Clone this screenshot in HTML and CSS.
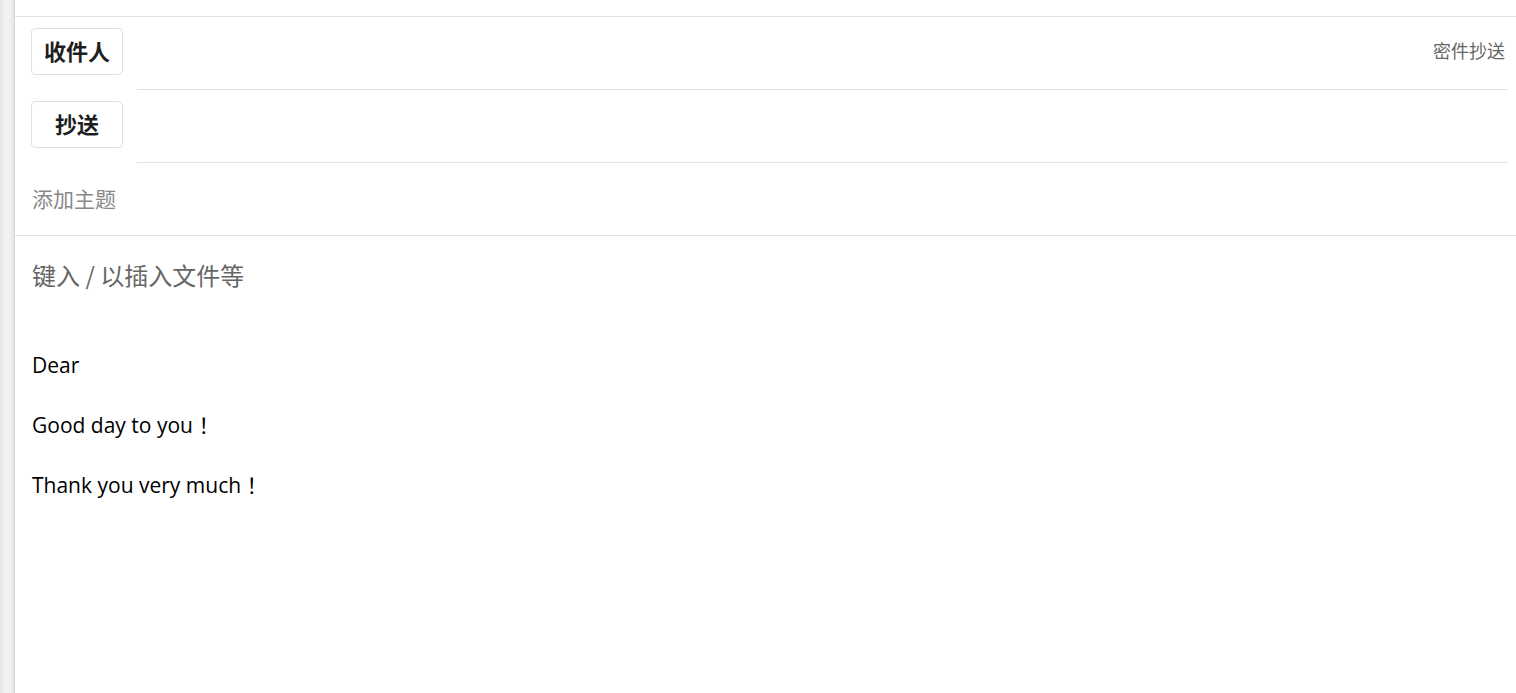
FILE: index.html
```html
<!DOCTYPE html>
<html lang="zh-CN">
<head>
<meta charset="utf-8">
<title>写邮件</title>
<link rel="stylesheet" href="styles.css">
</head>
<body>
<div class="app">
  <div class="rail"></div>
  <main class="compose">
    <div class="topbar"></div>
    <div class="row">
      <button class="chip">收件人</button>
      <div class="field"><span class="bcc">密件抄送</span></div>
    </div>
    <div class="row">
      <button class="chip">抄送</button>
      <div class="field"></div>
    </div>
    <div class="subject">添加主题</div>
    <div class="body">
      <div class="placeholder">键入 / 以插入文件等</div>
      <p class="para first">Dear</p>
      <p class="para">Good day to you ！</p>
      <p class="para">Thank you very much ！</p>
    </div>
  </main>
</div>
</body>
</html>
```

FILE: styles.css
```css
html, body {
  margin: 0;
  padding: 0;
  height: 100%;
  background: #ffffff;
}
body {
  font-family: "Noto Sans CJK SC", "Noto Sans", sans-serif;
  color: #222;
  overflow: hidden;
}
.app {
  display: flex;
  height: 693px;
}
.rail {
  width: 14px;
  flex: none;
  background: linear-gradient(to right, #e4e4e4 0px, #efefef 3px, #f3f3f3 7px, #eeeeee 11px, #e2e2e2 14px);
  border-right: 1px solid #d8d8d8;
}
.compose {
  flex: 1;
  display: flex;
  flex-direction: column;
  min-width: 0;
}
.topbar {
  height: 16px;
  border-bottom: 1px solid #e1e1e1;
}
.row {
  display: flex;
  align-items: flex-start;
  height: 73px;
  padding-left: 16px;
  padding-right: 8px;
}
.chip {
  margin-top: 11px;
  width: 92px;
  height: 47px;
  flex: none;
  background: #fff;
  border: 1px solid #e0e0e0;
  border-radius: 4px;
  font-family: "Noto Sans CJK SC", sans-serif;
  font-weight: 700;
  font-size: 22px;
  color: #1e1e1e;
  padding: 0 0 4px 0;
  line-height: 1;
}
.field {
  flex: 1;
  margin-left: 14px;
  height: 72px;
  border-bottom: 1px solid #e1e1e1;
  display: flex;
  align-items: center;
  justify-content: flex-end;
}
.bcc {
  font-size: 18px;
  color: #666;
  margin-right: 3px;
  margin-top: -6px;
}
.subject {
  border-bottom: 1px solid #e1e1e1;
  padding-left: 17px;
  display: flex;
  align-items: center;
  font-size: 21px;
  color: #888;
  padding-bottom: 3px;
  box-sizing: border-box;
  height: 73px;
}
.body {
  padding-left: 17px;
  padding-top: 22px;
}
.placeholder {
  font-size: 24px;
  line-height: 34px;
  color: #666;
}
.para {
  margin: 0;
  font-family: "Open Sans", "Noto Sans CJK SC", sans-serif;
  font-size: 21px;
  line-height: 30px;
  color: #000;
  margin-bottom: 30px;
}
.para.first {
  margin-top: 58px;
}
```
